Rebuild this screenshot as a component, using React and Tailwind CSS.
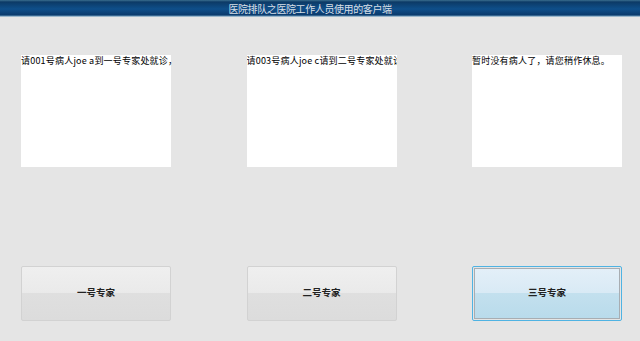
export default function App() {
  const msgs = [
    "请001号病人joe a到一号专家处就诊，",
    "请003号病人joe c请到二号专家处就诊",
    "暂时没有病人了，请您稍作休息。",
  ];
  const labels = ["一号专家", "二号专家", "三号专家"];
  const font = { fontFamily: '"Noto Sans CJK SC", "Liberation Sans", sans-serif' };
  return (
    <div className="w-[640px] h-[341px] bg-[#e5e5e5] flex flex-col overflow-hidden" style={font}>
      <div className="h-[17px] shrink-0 bg-[linear-gradient(to_bottom,#3b6f8f_0px,#0c3a66_2px,#0f4f8a_9px,#0a3a6c_15px,#5f8fb2_16px,#d7dee4_17px)] flex items-center justify-center">
        <span className="text-[10px] leading-none text-[#d8dfe6] ml-[-20px] tracking-[-0.4px]">医院排队之医院工作人员使用的客户端</span>
      </div>
      <div className="flex gap-[75.5px] pl-[21px] mt-[38px]">
        {msgs.map((m, i) => (
          <div key={i} className={i === 1 ? "w-[150px] h-[112px] bg-white overflow-hidden" : "w-[150px] h-[112px] bg-white"}>
            <div className="text-[9px] leading-[10px] whitespace-nowrap text-black pt-[1px] tracking-[0.2px]">{m}</div>
          </div>
        ))}
      </div>
      <div className="flex gap-[75.5px] pl-[21px] mt-[99px]">
        {labels.map((l, i) =>
          i === 2 ? (
            <div key={i} className="w-[150px] h-[55px] rounded-[2px] border border-[#4fb3e3] p-[1px]">
              <div className="w-full h-full border border-[#a8adb2] bg-[linear-gradient(to_bottom,#e3eff8_0%,#d9eaf5_48%,#c3e0ee_50%,#b9dbeb_100%)] flex items-center justify-center pb-[2px]">
                <span className="text-[9.5px] leading-none text-[#222] font-bold">{l}</span>
              </div>
            </div>
          ) : (
            <div key={i} className="w-[150px] h-[55px] rounded-[2px] border border-[#d2d2d2] bg-[linear-gradient(to_bottom,#efefef_0%,#eaeaea_48%,#dfdfdf_50%,#dcdcdc_100%)] flex items-center justify-center pb-[2px]">
              <span className="text-[9.5px] leading-none text-[#222] font-bold">{l}</span>
            </div>
          )
        )}
      </div>
    </div>
  );
}
